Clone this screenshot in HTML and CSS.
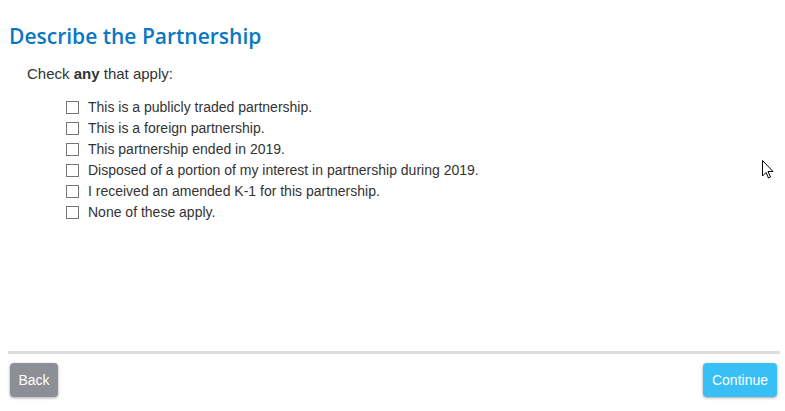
FILE: index.html
```html
<!DOCTYPE html>
<html lang="en">
<head>
  <meta charset="UTF-8">
  <title>Describe the Partnership</title>
  <link rel="stylesheet" href="styles.css">
</head>
<body>
  <div class="page">
    <div class="content">
      <h1 class="title">Describe the Partnership</h1>
      <p class="prompt">Check <strong>any</strong> that apply:</p>
      <ul class="options">
        <li><label><input type="checkbox"> This is a publicly traded partnership.</label></li>
        <li><label><input type="checkbox"> This is a foreign partnership.</label></li>
        <li><label><input type="checkbox"> This partnership ended in 2019.</label></li>
        <li><label><input type="checkbox"> Disposed of a portion of my interest in partnership during 2019.</label></li>
        <li><label><input type="checkbox"> I received an amended K-1 for this partnership.</label></li>
        <li><label><input type="checkbox"> None of these apply.</label></li>
      </ul>
    </div>
    <div class="footer">
      <button class="btn btn-back">Back</button>
      <button class="btn btn-continue">Continue</button>
    </div>
  </div>
  <svg class="cursor" width="12" height="19" viewBox="0 0 12 19">
    <path d="M0.5 0.5 L0.5 16 L4 12.5 L6.5 18 L8.5 17 L6 11.5 L11 11.5 Z" fill="#fff" stroke="#000" stroke-width="1"/>
  </svg>
</body>
</html>
```

FILE: styles.css
```css
body {
  margin: 0;
  font-family: "Liberation Sans", Arial, sans-serif;
  color: #333;
  background: #fff;
}
.page {
  height: 411px;
  display: flex;
  flex-direction: column;
  padding: 0 5px 0 8px;
  box-sizing: border-box;
}
.content {
  flex: 1;
}
.title {
  margin: 22px 0 0 1px;
  font-family: "Open Sans", sans-serif;
  font-weight: 600;
  font-size: 21px;
  color: #0a77c4;
}
.prompt {
  margin: 15px 0 0 19px;
  font-size: 15px;
}
.options {
  list-style: none;
  margin: 15px 0 0 58px;
  padding: 0;
  font-size: 14px;
}
.options li {
  height: 21px;
  line-height: 21px;
}
.options label {
  display: flex;
  align-items: center;
}
.options input {
  width: 13px;
  height: 13px;
  margin: 0 9px 0 0;
  appearance: none;
  border: 1px solid #767676;
  background: #fff;
  box-sizing: border-box;
}
.footer {
  border-top: 3px solid #dedede;
  margin-bottom: 14px;
  padding-top: 9px;
  display: flex;
  justify-content: space-between;
}
.btn {
  height: 34px;
  border: none;
  border-radius: 4px;
  color: #fff;
  font-family: "Liberation Sans", Arial, sans-serif;
  font-size: 14px;
  padding: 0;
  box-shadow: 0 1px 3px rgba(0, 0, 0, 0.35);
}
.btn-back {
  width: 48px;
  background: #8d8f96;
  margin-left: 2px;
}
.btn-continue {
  width: 74px;
  background: #38c0f6;
  margin-right: 3px;
}
.cursor {
  position: absolute;
  left: 762px;
  top: 160px;
}
```
